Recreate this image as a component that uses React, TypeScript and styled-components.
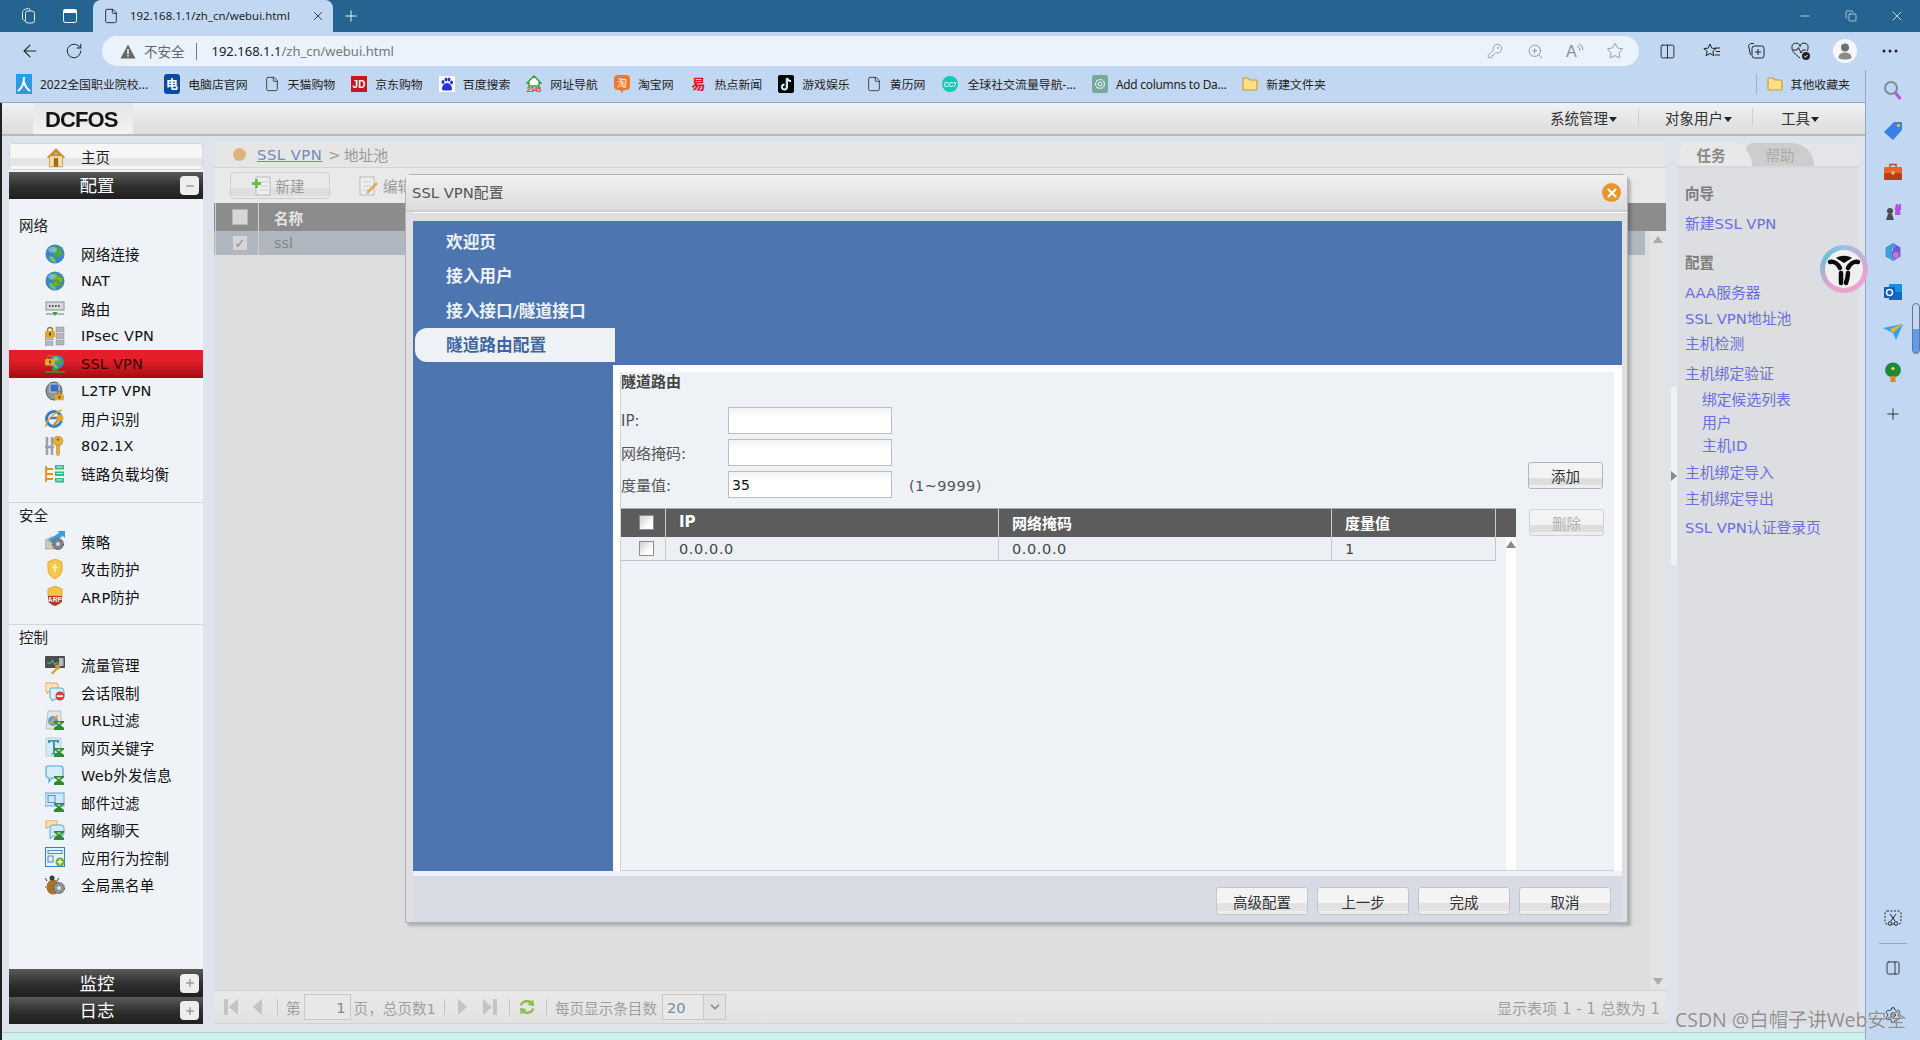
import React from "react";
import styled, { createGlobalStyle } from "styled-components";
import {
  ArrowLeft, RotateCw, File, X, Plus, Minus, Copy, KeyRound, ZoomIn, Star, Settings, PanelRight, Columns2, ChevronDown,
} from "lucide-react";

const Global = createGlobalStyle`
  html, body { margin: 0; padding: 0; width: 1920px; height: 1040px; overflow: hidden; }
  * { box-sizing: border-box; }
  body { font-family: "DejaVu Sans", "Noto Sans CJK SC", sans-serif; font-size: 14.5px; color: #222; }
`;

const Root = styled.div`
  position: relative;
  width: 1920px;
  height: 1040px;
  display: flex;
  flex-direction: column;
  overflow: hidden;
  background: #c2d8f2;
`;

/* ---------- Browser chrome ---------- */
const TitleBar = styled.div`
  height: 32px;
  background: #256490;
  display: flex;
  align-items: stretch;
  padding-left: 7px;
  color: #fff;
`;
const ChromeSlot = styled.div<{ $w?: number }>`
  width: ${(p) => p.$w ?? 44}px;
  flex: none;
  display: flex;
  align-items: center;
  justify-content: center;
`;
const Tab = styled.div`
  margin-left: 2px;
  width: 240px;
  background: #c2d8f2;
  border-radius: 8px 8px 0 0;
  color: #1c1c1c;
  display: flex;
  align-items: center;
  padding: 0 8px 0 10px;
  gap: 11px;
`;
const TabTitle = styled.span`
  font: 11.4px "Noto Sans", sans-serif;
  white-space: nowrap;
  flex: 1;
  padding-bottom: 2px;
`;
const WindowControls = styled.div`
  margin-left: auto;
  display: flex;
`;
const Toolbar = styled.div`
  height: 38px;
  display: flex;
  align-items: center;
  padding: 0 8px;
  color: #222;
`;
const Omni = styled.div`
  flex: 1;
  height: 30px;
  margin: 0 6px;
  background: #e9f2fd;
  border-radius: 15px;
  display: flex;
  align-items: center;
  padding: 0 4px 0 18px;
`;
const NotSecure = styled.span`
  margin-left: 8px;
  font: 13.5px "Noto Sans CJK SC", sans-serif;
  color: #666;
`;
const OmniSep = styled.span`
  width: 1px;
  height: 17px;
  background: #777;
  margin: 0 15px 0 11px;
`;
const Url = styled.span`
  font: 13px "Noto Sans", sans-serif;
  color: #777;
  b { font-weight: 400; color: #222; }
`;
const OmniTools = styled.div`
  margin-left: auto;
  display: flex;
  color: #8a8f96;
`;
const Below = styled.div`
  flex: 1;
  display: flex;
  min-height: 0;
`;
const PageColumn = styled.div`
  flex: 1;
  min-width: 0;
  display: flex;
  flex-direction: column;
`;
const Bookmarks = styled.div`
  height: 33px;
  flex: none;
  border-bottom: 1px solid #8fa8c0;
  display: flex;
  align-items: center;
  padding: 0 0 5px 16px;
  gap: 16px;
  font: 11.9px "Noto Sans", "Noto Sans CJK SC", sans-serif;
  color: #222;
`;
const Bookmark = styled.div<{ $tight?: boolean }>`
  display: flex;
  align-items: center;
  gap: 8px;
  white-space: nowrap;
  letter-spacing: ${(p) => (p.$tight ? "-0.25px" : "0")};
`;
const BookmarkEnd = styled.div`
  margin-left: auto;
  display: flex;
  align-items: center;
  gap: 8px;
  padding: 0 15px 0 10px;
  border-left: 1px solid #9fb4cc;
  height: 20px;
`;
const Rail = styled.div`
  width: 55px;
  flex: none;
  border-left: 1px solid #8fa8c8;
  display: flex;
  flex-direction: column;
  align-items: center;
`;
const RailIcon = styled.div<{ $h?: number }>`
  height: ${(p) => p.$h ?? 40}px;
  width: 100%;
  display: flex;
  align-items: center;
  justify-content: center;
  color: #222;
`;
const RailSpacer = styled.div`
  flex: 1;
`;
const RailRule = styled.div`
  width: 28px;
  height: 1px;
  background: #8fa8c8;
  margin: 2px 0;
`;
const RailThumb = styled.div`
  position: absolute;
  left: 1912px;
  top: 303px;
  width: 8px;
  height: 51px;
  border: 1.5px solid #6d7680;
  border-radius: 4px;
  background: linear-gradient(#c2d8f2 0 50%, #5f9cf0 50%);
`;

/* ---------- Firewall page ---------- */
const Page = styled.div`
  flex: 1;
  min-height: 0;
  display: flex;
  flex-direction: column;
  background: #dfe3eb;
  border-left: 2px solid #222;
`;
const Header = styled.div`
  height: 33px;
  flex: none;
  background: linear-gradient(#f1f1f1, #dcdcdc);
  border-bottom: 2px solid #b8b8b8;
  display: flex;
  align-items: center;
`;
const LogoBox = styled.div`
  margin-left: 31px;
  width: 100px;
  height: 31px;
  background: linear-gradient(#e6e6e6, #f2f2f2);
  display: flex;
  align-items: center;
  padding: 2px 0 0 12px;
  font: bold 22px "Liberation Sans", sans-serif;
  letter-spacing: -0.9px;
  color: #151515;
  filter: blur(0.6px);
`;
const HeaderMenus = styled.div`
  margin-left: auto;
  display: flex;
  align-items: center;
  padding: 0 46px 3px 0;
  color: #333;
`;
const HeaderMenu = styled.div<{ $l: number; $r: number; $sep?: boolean }>`
  display: flex;
  align-items: center;
  height: 18px;
  padding: 0 ${(p) => p.$r}px 0 ${(p) => p.$l}px;
  border-right: ${(p) => (p.$sep ? "1px solid #cfcfcf" : "none")};
  font-size: 14.5px;
  gap: 1px;
`;
const Caret = styled.span`
  width: 0;
  height: 0;
  border: 4.5px solid transparent;
  border-top: 5px solid #222;
  border-bottom: 0;
  margin-top: 4px;
`;
const Main = styled.div`
  flex: 1;
  min-height: 0;
  display: flex;
  padding: 7px 6px 8px 7px;
`;
const Sidebar = styled.div`
  width: 194px;
  flex: none;
  display: flex;
  flex-direction: column;
  background: #eff2f7;
`;
const HomeRow = styled.div`
  height: 27px;
  margin-bottom: 2px;
  display: flex;
  align-items: center;
  padding-left: 35px;
  gap: 14px;
  background: linear-gradient(#f6f6f6 0 55%, #e6e6e6 55% 90%, #f6f6f6 90%);
  border: 1px solid #d6d6d6;
  border-radius: 3px;
`;
const SideBar = styled.div<{ $h: number }>`
  height: ${(p) => p.$h}px;
  flex: none;
  display: flex;
  align-items: center;
  padding: 0 4px 0 9px;
  background: linear-gradient(#5a5a5a, #2e2e2e 55%, #1f1f1f);
  color: #fff;
`;
const SideBarTitle = styled.span`
  flex: 1;
  text-align: center;
  padding: 0 4px 2px 0;
  font-size: 17.5px;
`;
const Toggle = styled.span`
  width: 19px;
  height: 19px;
  border-radius: 4px;
  background: #eee;
  color: #777;
  display: flex;
  align-items: center;
  justify-content: center;
`;
const Section = styled.div<{ $pt: number; $pb: number; $line?: boolean }>`
  padding: ${(p) => p.$pt}px 0 ${(p) => p.$pb}px;
  border-bottom: ${(p) => (p.$line ? "1px solid #d2d5da" : "none")};
`;
const SectionLabel = styled.div<{ $h: number; $up: number }>`
  height: ${(p) => p.$h}px;
  display: flex;
  align-items: center;
  padding: 0 0 ${(p) => p.$up}px 10px;
  color: #222;
`;
const NavRow = styled.div<{ $active?: boolean }>`
  height: 27.5px;
  display: flex;
  align-items: center;
  padding-left: 36px;
  gap: 16px;
  color: ${(p) => (p.$active ? "#300" : "#111")};
  background: ${(p) => (p.$active ? "linear-gradient(#e41f2a 0 35%, #a50c12)" : "none")};
  white-space: nowrap;
  letter-spacing: 0.2px;
`;
const SideFill = styled.div`
  flex: 1;
`;
const Content = styled.div`
  width: 1452px;
  flex: none;
  margin-left: 11px;
  display: flex;
  flex-direction: column;
  background: #dddee0;
`;
const Crumb = styled.div`
  height: 25px;
  flex: none;
  display: flex;
  align-items: center;
  padding: 0 0 2px 19px;
  color: #999;
  background: #e6e6e7;
  border-bottom: 1px solid #d4d4d4;
  font-size: 14.8px;
`;
const CrumbDot = styled.span`
  width: 13px;
  height: 13px;
  border-radius: 50%;
  background: #dcb479;
  margin-right: 11px;
`;
const CrumbLink = styled.span`
  color: #7488bb;
  text-decoration: underline;
  letter-spacing: 0.5px;
  margin-right: 6px;
`;
const CrumbSep = styled.span`
  margin-right: 3px;
`;
const ListTools = styled.div`
  height: 35px;
  flex: none;
  display: flex;
  align-items: center;
  padding-left: 16px;
  background: #e9e9ea;
  color: #999;
`;
const ToolButton = styled.div`
  width: 100px;
  height: 27px;
  display: flex;
  align-items: center;
  justify-content: center;
  gap: 4px;
  padding: 0 4px 0 0;
  border: 1px solid #d0d0d0;
  border-radius: 4px;
  background: linear-gradient(#e9e9e9 0 60%, #dedede 60% 90%, #e9e9e9 90%);
`;
const ToolPlain = styled.div`
  margin-left: 29px;
  display: flex;
  align-items: center;
  gap: 4px;
`;
const ListHead = styled.div`
  height: 28px;
  flex: none;
  display: flex;
  align-items: center;
  background: #8c8c8c;
  color: #e4e4e4;
  font-weight: 700;
`;
const ListCheckCell = styled.div`
  width: 44px;
  height: 100%;
  flex: none;
  display: flex;
  align-items: center;
  justify-content: center;
  padding-left: 6px;
  border-left: 1px solid #d0d0d0;
  border-right: 1px solid #d0d0d0;
  margin-left: 1px;
`;
const ListName = styled.div`
  flex: 1;
  padding-left: 15px;
`;
const ListBody = styled.div`
  flex: 1;
  min-height: 0;
  display: flex;
`;
const ListRows = styled.div`
  flex: 1;
`;
const ListRow = styled.div`
  width: 1431px;
  height: 24px;
  display: flex;
  align-items: center;
  background: #b1b7c1;
  color: #868686;
`;
const ScrollCol = styled.div`
  width: 16px;
  flex: none;
  background: #e2e3e5;
  display: flex;
  flex-direction: column;
  justify-content: space-between;
  align-items: center;
  padding: 5px 0;
`;
const Tri = styled.span<{ $dir: "up" | "down"; $c?: string }>`
  width: 0;
  height: 0;
  border: 5px solid transparent;
  ${(p) =>
    p.$dir === "up"
      ? `border-bottom: 7px solid ${p.$c ?? "#aaa"}; border-top: 0;`
      : `border-top: 7px solid ${p.$c ?? "#aaa"}; border-bottom: 0;`}
`;
const Pager = styled.div`
  height: 34px;
  flex: none;
  display: flex;
  align-items: center;
  background: linear-gradient(#e9e9ea, #e2e2e3);
  border-top: 1px solid #d2d2d2;
  border-bottom: 1px solid #d2d2d2;
  color: #a0a0a0;
  font-size: 14.6px;
  padding-right: 6px;
`;
const PagerItem = styled.span<{ $ml: number }>`
  margin-left: ${(p) => p.$ml}px;
  display: flex;
  align-items: center;
  white-space: nowrap;
`;
const PagerSep = styled.span<{ $ml: number }>`
  margin-left: ${(p) => p.$ml}px;
  width: 1px;
  height: 16px;
  background: #c4c4c4;
`;
const PagerInput = styled.div<{ $w: number; $align: string }>`
  width: ${(p) => p.$w}px;
  height: 26px;
  border: 1px solid #c8c8c8;
  background: #e8e8e8;
  display: flex;
  align-items: center;
  justify-content: ${(p) => p.$align};
  padding: 0 4px;
  color: #808a96;
`;
const PagerSelectBtn = styled.div`
  width: 22px;
  height: 26px;
  border: 1px solid #c8c8c8;
  border-left: 0;
  background: #e2e2e2;
  display: flex;
  align-items: center;
  justify-content: center;
  color: #888;
`;
const PagerTotal = styled.span`
  margin-left: auto;
  white-space: nowrap;
  font-size: 15px;
`;
const Gutter = styled.div`
  width: 11px;
  flex: none;
  display: flex;
  flex-direction: column;
  align-items: flex-end;
  padding-top: 244px;
`;
const Handle = styled.div`
  width: 6px;
  height: 178px;
  background: #f0f1f3;
  border-radius: 3px 0 0 3px;
  display: flex;
  align-items: center;
  justify-content: flex-end;
`;
const HandleTri = styled.span`
  width: 0;
  height: 0;
  border: 5px solid transparent;
  border-left: 6px solid #888;
  border-right: 0;
`;
const Tasks = styled.div`
  width: 182px;
  flex: none;
  display: flex;
  flex-direction: column;
  background: #dddee2;
`;
const TaskTabs = styled.div`
  height: 25px;
  flex: none;
  display: flex;
  align-items: flex-end;
  padding-left: 3px;
  background: #e3e5ea;
  border-bottom: 2px solid #d8d9dc;
`;
const TaskTab = styled.div<{ $on?: boolean }>`
  width: ${(p) => (p.$on ? 72 : 68)}px;
  height: 23px;
  margin-left: ${(p) => (p.$on ? 0 : -6)}px;
  padding-right: ${(p) => (p.$on ? 10 : 0)}px;
  border-radius: 8px 22px 0 0;
  display: flex;
  align-items: center;
  justify-content: center;
  background: ${(p) => (p.$on ? "#e8e8e8" : "#cdcdcd")};
  color: ${(p) => (p.$on ? "#888" : "#aaa")};
  font-weight: ${(p) => (p.$on ? 700 : 400)};
  position: ${(p) => (p.$on ? "relative" : "static")};
  z-index: ${(p) => (p.$on ? 1 : 0)};
`;
const TaskList = styled.div`
  padding: 13px 0 0 8px;
  display: flex;
  flex-direction: column;
`;
const TaskHead = styled.div<{ $mt?: number }>`
  height: 22px;
  margin-top: ${(p) => p.$mt ?? 0}px;
  display: flex;
  align-items: center;
  color: #7c7c7c;
  font-weight: 700;
  font-size: 14.5px;
`;
const TaskLink = styled.div<{ $mt: number; $sub?: boolean }>`
  height: 22px;
  margin-top: ${(p) => p.$mt}px;
  display: flex;
  align-items: center;
  padding-left: ${(p) => (p.$sub ? 17 : 0)}px;
  color: #6b6edc;
  white-space: nowrap;
  font-size: 14.8px;
`;
const Strip = styled.div`
  height: 8px;
  flex: none;
  background: #cdf3f1;
  border-top: 1px solid #b7cdd0;
`;

/* ---------- Dialog ---------- */
const Dialog = styled.div`
  position: absolute;
  left: 405px;
  top: 174px;
  width: 1223px;
  height: 749px;
  display: flex;
  flex-direction: column;
  background: #dfdfe1;
  border: 1px solid #b2b2b2;
  border-radius: 6px 6px 0 0;
  box-shadow: 3px 3px 3px rgba(0, 0, 0, 0.22);
`;
const DialogTitle = styled.div`
  height: 37px;
  flex: none;
  display: flex;
  align-items: center;
  justify-content: space-between;
  padding: 0 6px 0 6px;
  background: linear-gradient(#f0f0f0, #dcdcdc);
  border-bottom: 2px solid #cfcfcf;
  color: #555;
  font-size: 14.8px;
`;
const DialogTitleText = styled.span`
  padding-bottom: 2px;
`;
const CloseDot = styled.span`
  width: 19px;
  height: 19px;
  border-radius: 50%;
  background: #e7962b;
  color: #fff;
  display: flex;
  align-items: center;
  justify-content: center;
`;
const TitleGap = styled.div`
  height: 9px;
  flex: none;
  border-top: 1px solid #fff;
  margin-left: 7px;
`;
const Wizard = styled.div`
  flex: 1;
  min-height: 0;
  margin: 0 5px 0 7px;
  display: flex;
  background: #4d76b0;
`;
const WizardNav = styled.div`
  width: 202px;
  flex: none;
  padding-top: 4px;
  position: relative;
  z-index: 1;
`;
const WizardItem = styled.div<{ $active?: boolean }>`
  height: 34.3px;
  display: flex;
  align-items: center;
  margin-left: 2px;
  padding: 0 0 2px 31px;
  font-size: 16.7px;
  font-weight: 700;
  white-space: nowrap;
  color: ${(p) => (p.$active ? "#3f659f" : "#edf2f9")};
  background: ${(p) => (p.$active ? "#eef1f6" : "transparent")};
  border-radius: ${(p) => (p.$active ? "12px 0 0 12px" : "0")};
`;
const WizardMain = styled.div`
  flex: 1;
  margin: 144px 0 0 -2px;
  background: #fff;
  padding: 7px 8px 0 7px;
  display: flex;
  min-width: 0;
`;
const Panel = styled.div`
  flex: 1;
  display: flex;
  flex-direction: column;
  background: #eef1f6;
  border-left: 1px solid #d0d4da;
  border-bottom: 1px solid #ced2d8;
  min-width: 0;
`;
const PanelTitle = styled.div`
  height: 20px;
  flex: none;
  display: flex;
  align-items: center;
  padding-bottom: 4px;
  font-size: 15px;
  font-weight: 700;
  color: #444;
`;
const FormArea = styled.div`
  margin-top: 15px;
  display: flex;
  align-items: flex-end;
  justify-content: space-between;
  padding-right: 11px;
`;
const Form = styled.div`
  display: flex;
  flex-direction: column;
  gap: 5px;
`;
const FormRow = styled.div`
  height: 27px;
  display: flex;
  align-items: center;
  color: #555;
`;
const FormLabel = styled.span`
  width: 107px;
  flex: none;
  font-size: 15px;
`;
const Input = styled.div`
  width: 164px;
  height: 27px;
  flex: none;
  border: 1px solid #bdbdbd;
  background: linear-gradient(#f2f2f2, #fff 35%);
  display: flex;
  align-items: center;
  padding-left: 3px;
  color: #111;
  font-size: 14px;
`;
const Hint = styled.span`
  margin-left: 17px;
  margin-top: 3px;
  letter-spacing: 0.4px;
  font-size: 14.5px;
`;
const SmallButton = styled.div<{ $off?: boolean }>`
  width: 75px;
  height: 27px;
  flex: none;
  border: 1px solid ${(p) => (p.$off ? "#d2d2d2" : "#b4b4b4")};
  border-radius: 3px;
  background: linear-gradient(#f3f3f3 0 60%, #dedede 60% 90%, #eee 90%);
  display: flex;
  align-items: center;
  justify-content: center;
  color: ${(p) => (p.$off ? "#b2b2b2" : "#333")};
  font-size: 14.5px;
`;
const AddWrap = styled.div`
  margin-bottom: 9px;
`;
const TableArea = styled.div`
  margin-top: 10px;
  flex: 1;
  min-height: 0;
  display: flex;
`;
const RouteTable = styled.div`
  width: 895px;
  flex: none;
  display: flex;
  flex-direction: column;
`;
const RouteHead = styled.div`
  height: 29px;
  flex: none;
  display: grid;
  grid-template-columns: 45px 333px 333px 164px 20px;
  background: #5c5c5c;
  border-top: 1px solid #aaa;
  color: #fff;
  font-size: 15px;
  font-weight: 700;
`;
const HeadCell = styled.div<{ $center?: boolean }>`
  display: flex;
  align-items: center;
  justify-content: ${(p) => (p.$center ? "center" : "flex-start")};
  padding: 0 0 2px ${(p) => (p.$center ? 6 : 13)}px;
  border-right: 1px solid #c8ccd0;
`;
const RouteBody = styled.div`
  flex: 1;
  min-height: 0;
  display: flex;
`;
const RouteRows = styled.div`
  width: 875px;
  flex: none;
`;
const RouteRow = styled.div`
  height: 24px;
  display: grid;
  grid-template-columns: 45px 333px 333px 164px;
  background: #ecf0f5;
  border-bottom: 1px solid #bfc4ca;
  color: #444;
  font-size: 14.5px;
  letter-spacing: 0.6px;
`;
const RouteCell = styled.div<{ $center?: boolean }>`
  display: flex;
  align-items: center;
  justify-content: ${(p) => (p.$center ? "center" : "flex-start")};
  padding-left: ${(p) => (p.$center ? 6 : 13)}px;
  border-right: 1px solid #c4c8ce;
`;
const RouteScroll = styled.div`
  margin-left: 10px;
  width: 10px;
  flex: none;
  background: #fff;
  display: flex;
  justify-content: center;
  padding-top: 4px;
`;
const SideActions = styled.div`
  margin: 1px 0 0 13px;
`;
const DialogFootGap = styled.div`
  height: 5px;
  flex: none;
  margin: 0 5px 0 7px;
  background: #eef1f6;
`;
const DialogFoot = styled.div`
  height: 46px;
  flex: none;
  margin: 0 5px 0 7px;
  background: #d9dbe4;
  display: flex;
  justify-content: flex-end;
  gap: 9px;
  padding: 11px 11px 0 0;
`;
const FootButton = styled.div`
  width: 92px;
  height: 28px;
  border: 1px solid #c4c6cc;
  border-radius: 3px;
  background: linear-gradient(#f4f4f5 0 58%, #e2e2e3 58% 90%, #eee 90%);
  display: flex;
  align-items: center;
  justify-content: center;
  color: #333;
  font-size: 14.5px;
`;
const Check = styled.span<{ $dim?: boolean }>`
  width: ${(p) => (p.$dim ? 16 : 15)}px;
  height: ${(p) => (p.$dim ? 16 : 15)}px;
  display: flex;
  align-items: center;
  justify-content: center;
  border: 1px solid ${(p) => (p.$dim ? "#b4b4b4" : "#8e8e8e")};
  background: ${(p) => (p.$dim ? "#d6d6d6" : "linear-gradient(135deg,#cfcfcf,#fff 70%)")};
  color: #8a8a8a;
  font-size: 13px;
`;

/* ---------- Overlays ---------- */
const Badge = styled.div`
  position: absolute;
  left: 1820px;
  top: 245px;
  width: 48px;
  height: 48px;
  border-radius: 50%;
  padding: 5px;
  background: conic-gradient(#9fc0e0, #e9a3cf 30%, #e9a3cf 60%, #6dbed8 85%, #9fc0e0);
  display: flex;
`;
const BadgeInner = styled.div`
  flex: 1;
  border-radius: 50%;
  background: #f0f0f0;
  display: flex;
  align-items: center;
  justify-content: center;
`;
const Watermark = styled.div`
  position: absolute;
  left: 1675px;
  top: 1004px;
  font: 19.4px "Noto Sans", "Noto Sans CJK SC", sans-serif;
  color: rgba(125, 125, 125, 0.85);
  text-shadow: 0 0 1px rgba(255, 255, 255, 0.8);
  white-space: nowrap;
`;

/* ---------- Drawings ---------- */
const S: React.FC<{ w?: number; h?: number; children: React.ReactNode; vb?: string }> = ({ w = 20, h = 20, vb = "0 0 20 20", children }) => (
  <svg width={w} height={h} viewBox={vb} style={{ flex: "none" }}>{children}</svg>
);
const Funnel = () => (
  <g>
    <path d="M9 11h10v1.6l-3.6 2.6 3.6 2.6V20H9v-2.2l3.6-2.6L9 12.6z" fill="#2f8a2f" />
    <path d="M11.5 12.5h5l-2.5 2z" fill="#bfe7a8" />
  </g>
);
const Globe = ({ cx = 10, cy = 10, r = 9.5 }) => (
  <g>
    <circle cx={cx} cy={cy} r={r} fill="#3b86c9" />
    <path d={`M${cx - r * 0.3} ${cy - r * 0.9}c${r * 0.7} ${r * 0.1} ${r * 1.1} ${r * 0.4} ${r * 1.1} ${r * 0.9}l${-r * 0.4} ${r * 0.4}l${-r * 0.5} ${-r * 0.2}l${-r * 0.2} ${-r * 0.5}z`} fill="#4fa64a" />
    <path d={`M${cx - r * 0.6} ${cy + r * 0.2}c${r * 0.4} 0 ${r * 0.7} ${r * 0.3} ${r * 0.7} ${r * 0.7}c${-r * 0.4} 0 ${-r * 0.7} ${-r * 0.3} ${-r * 0.7} ${-r * 0.7}z`} fill="#79bf5a" />
    <ellipse cx={cx - r * 0.25} cy={cy - r * 0.45} rx={r * 0.45} ry={r * 0.3} fill="#9fd0f2" opacity=".6" />
  </g>
);
const Lock = ({ x = 0, y = 0 }) => (
  <g transform={`translate(${x} ${y})`}>
    <path d="M2.5 4V3a2.5 2.5 0 0 1 5 0v1" fill="none" stroke="#9a7a1a" strokeWidth="1.3" />
    <rect y="4" width="10" height="6.5" rx="1" fill="#e0a92c" />
    <rect x="4" y="5.5" width="2" height="3" fill="#6f4c0c" />
  </g>
);
const Server = ({ x = 0, y = 0 }) => (
  <g transform={`translate(${x} ${y})`} fill="#b5b8ba" stroke="#888" strokeWidth=".5">
    <rect width="8" height="5" /><rect y="6.5" width="8" height="5" /><rect y="13" width="8" height="5" />
  </g>
);
const NavIcon: React.FC<{ kind: string }> = ({ kind }) => {
  switch (kind) {
    case "home":
      return <S w={22} h={22}><path d="M2 10 10 2l8 8v1H2z" fill="#d98a1f" /><rect x="4" y="9" width="12" height="10" fill="#f3dfa9" stroke="#b58a3c" strokeWidth=".6" /><rect x="8" y="11" width="4" height="8" fill="#a8691f" /><circle cx="10" cy="7" r="1.5" fill="#7fb6e0" /></S>;
    case "globe":
      return <S><Globe /></S>;
    case "nat":
      return <S><Globe /><path d="M8 9c1-3 6-4 8-2l1.500-1.500V11h-5l1.800-1.800c-1.500-1-4-.8-5 .5zM18 12c-1 3-6 4-8 2l-1.500 1.500V11h5l-1.800 1.800c1.500 1 4 .8 5-.5z" fill="#7dbb2c" stroke="#4f8a15" strokeWidth=".4" /></S>;
    case "router":
      return <S><rect x="1" y="3" width="18" height="8" fill="#d8dadc" stroke="#8d8f91" /><g fill="#555"><rect x="4" y="6" width="1.6" height="2" /><rect x="7" y="6" width="1.600" height="2" /><rect x="10" y="6" width="1.6" height="2" /><rect x="13" y="6" width="1.6" height="2" /></g><path d="M1 15h18" stroke="#9a9a9a" strokeWidth="1.4" /><path d="M7.500 13h5L10 17z" fill="#39a13a" /></S>;
    case "ipsec":
      return <S><Server x={11} y={1} /><Server x={0} y={9} /><Lock x={0} y={1} /></S>;
    case "ssl":
      return <S><Globe cx={12} cy={8} r={7} /><Lock x={0} y={1} /><path d="M0 18h20M10 15v3" stroke="#2e9a3e" strokeWidth="1.5" /><rect x="7" y="14" width="6" height="2.5" fill="#39a13a" /></S>;
    case "l2tp":
      return <S><ellipse cx="9" cy="10" rx="8" ry="9" fill="#8f979c" stroke="#555" /><rect x="5" y="3" width="9" height="8" fill="#3d6fc0" stroke="#dde" strokeWidth=".8" /><g transform="scale(.9)"><Lock x={11} y={11} /></g></S>;
    case "user":
      return <S><circle cx="9" cy="10" r="7.500" fill="none" stroke="#2f7ed0" strokeWidth="3" /><path d="M5 9h8" stroke="#2f7ed0" strokeWidth="2.500" /><path d="M1 18C0 14 7 4 17 1" fill="none" stroke="#e3a72c" strokeWidth="1.500" /><circle cx="15" cy="9" r="3.500" fill="#e3a72c" /><path d="M13 11l-5 6" stroke="#c98b17" strokeWidth="2" /></S>;
    case "dot1x":
      return <S><path d="M2 1v18M7 1v18M0 11h9" stroke="#9ea0a2" strokeWidth="2.500" fill="none" /><circle cx="13" cy="5" r="4.800" fill="#e0b23a" stroke="#a9801c" strokeWidth=".6" /><circle cx="13" cy="3.500" r="1.200" fill="#8a6a12" /><path d="M11.500 9h3v9l-1.500 2-1.500-2z" fill="#e0b23a" stroke="#a9801c" strokeWidth=".5" /></S>;
    case "balance":
      return <S><path d="M1 2v16M1 5h7M1 10h7M1 15h7" stroke="#e6901e" strokeWidth="1.800" fill="none" /><g fill="#2fbf86"><rect x="10" y="1" width="9" height="4.500" /><rect x="10" y="7.500" width="9" height="4.500" /><rect x="10" y="14" width="9" height="4.500" /></g><g fill="#d9f7ea"><rect x="11.500" y="2.500" width="6" height="1" /><rect x="11.500" y="9" width="6" height="1" /><rect x="11.500" y="15.500" width="6" height="1" /></g></S>;
    case "policy":
      return <S><path d="M0 9l6-3h6v12H0z" fill="#cfc7b4" stroke="#8d8672" strokeWidth=".5" /><path d="M3 9 14 2l-1-2h7v7l-2-2L7 12z" fill="#3f9bdc" /><circle cx="13" cy="13" r="5.500" fill="#7d8288" stroke="#555" strokeDasharray="2 1" /><circle cx="13" cy="13" r="2" fill="#d8d8d8" /></S>;
    case "shield":
      return <S><path d="M10 0l7 3v7c0 4.500-3 8-7 10C6 18 3 14.500 3 10V3z" fill="#f4c94a" stroke="#e8a52a" /><path d="M10 5v8M7 8.500h6" stroke="#fbe9a6" strokeWidth="2" /></S>;
    case "arp":
      return <S><path d="M10 0l7 3v7H3V3z" fill="#f4c14a" stroke="#e8a52a" /><path d="M3 10h14v6c-2 1.500-4 3-7 4-3-1-5-2.500-7-4z" fill="#b13a2a" /><text x="10" y="15.800" fontSize="6.500" fontWeight="700" fontFamily="Liberation Sans" textAnchor="middle" fill="#fff">ARP</text></S>;
    case "traffic":
      return <S><rect y="1" width="20" height="12" rx="1" fill="#4a4d50" /><path d="M2 8h4l1.500-3 2 5 1-2h3" stroke="#4ed07a" fill="none" /><rect x="14" y="3" width="4.500" height="8" fill="#bbb" /><path d="M6 18l6-6 1.500 1.500-6 6z" fill="#d59a2b" /><circle cx="12.500" cy="12" r="2.500" fill="#d59a2b" /></S>;
    case "session":
      return <S><path d="M1 1h10a2 2 0 0 1 2 2v4a2 2 0 0 1-2 2H5l-3 3V9a2 2 0 0 1-2-2V3a2 2 0 0 1 1-2z" fill="#fbe3c0" stroke="#e6a65c" /><path d="M6 6h10a3 3 0 0 1 3 3v5a3 3 0 0 1-3 3h-6l-3 2v-2a2 2 0 0 1-2-2V8a2 2 0 0 1 1-2z" fill="#d9effa" stroke="#58a8d8" /><circle cx="15" cy="14" r="4.500" fill="#e13d3d" /><rect x="12" y="13.200" width="6" height="1.800" fill="#fff" /></S>;
    case "url":
      return <S><path d="M3 1h13v18H1z" fill="#e3e6e2" stroke="#9ba19a" strokeWidth=".6" /><circle cx="8" cy="11" r="5" fill="#5aa0d8" /><path d="M4 13 12 5l1.500 1.500-8 8z" fill="#e2a32a" /><Funnel /></S>;
    case "keyword":
      return <S><rect x="1" y="1" width="15" height="18" fill="#d7ecf2" stroke="#9fb6bd" strokeWidth=".6" /><path d="M3 3h11v3h-1.500l-.5-1.300H10V16h1.500v1.500h-5V16H8V4.700H5.500L5 6H3z" fill="#3f92b8" /><Funnel /></S>;
    case "webout":
      return <S><path d="M3 1h12a3 3 0 0 1 3 3v6a3 3 0 0 1-3 3H7l-3 4v-4a3 3 0 0 1-3-3V3a2 2 0 0 1 2-2z" fill="#d6eefc" stroke="#4fa5e0" strokeWidth="1.200" /><Funnel /></S>;
    case "mail":
      return <S><rect y="1" width="19" height="13" fill="#cfe7f8" stroke="#5aa6de" /><rect x="3" y="3.500" width="7" height="7" fill="none" stroke="#5f8fb3" /><Funnel /></S>;
    case "chat":
      return <S><path d="M2 0h8a2 2 0 0 1 2 2v5H3L1 9V1z" fill="#fbdcae" stroke="#e6a65c" /><path d="M7 5h9a3 3 0 0 1 3 3v5a3 3 0 0 1-3 3H8l-3 3V8a3 3 0 0 1 2-3z" fill="#cfeaf8" stroke="#58a8d8" /><Funnel /></S>;
    case "app":
      return <S><rect x=".5" y=".5" width="19" height="19" fill="#e5f1fb" stroke="#2f83c9" /><rect x="3" y="3.500" width="14" height="3" fill="none" stroke="#4b8dc4" /><rect x="3" y="9" width="5" height="6" fill="none" stroke="#4b8dc4" /><circle cx="15" cy="15" r="4.500" fill="#74b61e" /><path d="M15 12.500v5M12.500 15h5" stroke="#fff" strokeWidth="1.400" /></S>;
    default:
      return <S><ellipse cx="8" cy="12" rx="6.500" ry="7.500" fill="#a8742c" /><circle cx="7" cy="3" r="2.500" fill="#3a3a3a" /><path d="M2 6 0 3M12 6l2-3M1 12h-1" stroke="#333" /><circle cx="14" cy="13" r="5.500" fill="#8d9296" stroke="#555" strokeDasharray="2 1" /><circle cx="14" cy="13" r="2" fill="#ddd" /></S>;
  }
};

const Bm = {
  Ren: () => <S w={16} h={20} vb="0 0 16 20"><rect width="16" height="20" fill="#2d9ae6" /><path d="M8 3c0 6-2 11-6 14M8 8c1 4 3 7 6 9" stroke="#fff" strokeWidth="2" fill="none" /></S>,
  Dian: () => <S w={16} h={20} vb="0 0 16 20"><rect width="16" height="20" rx="3" fill="#0c4aa0" /><text x="8" y="15" fontSize="12" fontWeight="700" textAnchor="middle" fill="#fff" fontFamily="Noto Sans CJK SC">电</text></S>,
  Doc: () => <File size={16} strokeWidth={1.2} color="#222" />,
  Jd: () => <S w={16} h={16} vb="0 0 16 16"><rect width="16" height="16" fill="#c8161d" /><text x="8" y="12" fontSize="10" fontWeight="700" textAnchor="middle" fill="#fff" fontFamily="Liberation Sans">JD</text></S>,
  Baidu: () => <S w={16} h={16} vb="0 0 16 16"><rect width="16" height="16" fill="#fff" /><g fill="#2932e1"><ellipse cx="4" cy="6" rx="1.500" ry="2" /><ellipse cx="7" cy="3.500" rx="1.400" ry="2" /><ellipse cx="10" cy="3.500" rx="1.400" ry="2" /><ellipse cx="12.500" cy="6.500" rx="1.500" ry="2" /><path d="M8 7c-3 0-5 3.500-5 6 0 2 3 1.500 5 1.500s5 .5 5-1.500c0-2.500-2-6-5-6z" /></g></S>,
  Nav: () => <S w={16} h={18} vb="0 0 16 18"><path d="M8 1 1 8h2v3h10V8h2z" fill="#fff" stroke="#3b9c3e" strokeWidth="1.500" /><text x="8" y="17" fontSize="6.500" fontWeight="700" textAnchor="middle" fill="#d2332b" fontFamily="Liberation Sans">2345</text></S>,
  Tao: () => <S w={16} h={18} vb="0 0 16 18"><rect width="16" height="15" rx="4" fill="#f3762b" /><path d="M6 15l2 3 2-3z" fill="#f3762b" /><text x="8" y="12" fontSize="10" textAnchor="middle" fill="#fff" fontFamily="Noto Sans CJK SC">淘</text></S>,
  Hot: () => <S w={17} h={18} vb="0 0 17 18"><text x="8.500" y="14" fontSize="14" fontWeight="700" textAnchor="middle" fill="#e60f1a" fontFamily="Noto Sans CJK SC">易</text></S>,
  Tik: () => <S w={16} h={18} vb="0 0 16 18"><rect width="16" height="18" rx="2" fill="#000" /><path d="M9 3v9a2.500 2.500 0 1 1-2.500-2.500M9 3c.5 2 2 3 4 3" stroke="#fff" strokeWidth="1.800" fill="none" /><path d="M8 3v9a2.500 2.500 0 1 1-2.500-2.500" stroke="#25f4ee" strokeWidth=".7" fill="none" /></S>,
  Cc7: () => <S w={18} h={16} vb="0 0 18 16"><circle cx="9" cy="8" r="8" fill="#12c9b8" /><text x="9" y="10.500" fontSize="6.500" fontWeight="700" textAnchor="middle" fill="#dffbf6" fontFamily="Liberation Sans">CC7</text></S>,
  Gpt: () => <S w={16} h={18} vb="0 0 16 18"><rect width="16" height="18" rx="2" fill="#74aa9c" /><circle cx="8" cy="9" r="4.500" fill="none" stroke="#e8f4f0" strokeWidth="1.200" strokeDasharray="3 1" /><circle cx="8" cy="9" r="2" fill="none" stroke="#e8f4f0" /></S>,
  Folder: () => <S w={16} h={16} vb="0 0 16 16"><path d="M1 3a1 1 0 0 1 1-1h4l2 2h6a1 1 0 0 1 1 1v8a1 1 0 0 1-1 1H2a1 1 0 0 1-1-1z" fill="#fbe08a" stroke="#c79a2a" strokeWidth="1.100" /></S>,
};

const Chrome = {
  Workspaces: () => <S w={18} h={18} vb="0 0 18 18"><rect x="6.500" y="4" width="9" height="12" rx="2.500" fill="none" stroke="#dfe9f3" /><path d="M6.500 14.500 3.500 12V5.500c0-1.500 1-2.500 2.500-3l3-1.200c1-.3 1.700.3 1.700 1V4" fill="none" stroke="#dfe9f3" /></S>,
  Vertical: () => <S w={16} h={16} vb="0 0 16 16"><rect x="1.500" y="1.500" width="13" height="13" rx="2" fill="none" stroke="#fff" /><rect x="1.500" y="1.500" width="13" height="3.500" fill="#fff" /></S>,
  Warn: () => <S w={16} h={15} vb="0 0 16 15"><path d="M8 .5 15.500 14.500H.5z" fill="#666" /><rect x="7.200" y="5" width="1.600" height="5" fill="#e9f2fd" /><rect x="7.200" y="11" width="1.600" height="1.600" fill="#e9f2fd" /></S>,
  ReadAloud: () => <S w={18} h={18} vb="0 0 18 18"><text x="0" y="15" fontSize="16" fontFamily="Liberation Sans" fill="#8a8f96">A</text><path d="M11 4c2 1 3 2.500 3 5M13 2c2.500 1 4 3.500 4 6" stroke="#8a8f96" fill="none" /></S>,
  Fav: () => <S w={18} h={18} vb="0 0 18 18"><path d="M7 2l1.800 4.200 4.400.3-3.400 2.900 1.100 4.400L7 11.400l-3.900 2.400 1.100-4.400L.8 6.500l4.400-.3z" fill="none" stroke="#222" /><path d="M12 6h5M13 9.500h4M12 13h5" stroke="#222" /></S>,
  Coll: () => <S w={18} h={18} vb="0 0 18 18"><path d="M7 1.500H3.500l-2 2 2 9.500" fill="none" stroke="#222" /><rect x="5" y="4" width="12" height="12" rx="2.500" fill="none" stroke="#222" /><path d="M11 7v6M8 10h6" stroke="#222" /></S>,
  Health: () => <S w={20} h={18} vb="0 0 20 18"><path d="M9 16C4 12 1 9.500 1 6a4 4 0 0 1 8-1.500A4 4 0 0 1 17 6c0 1-.3 2-.8 3" fill="none" stroke="#222" /><path d="M2 8h4l1.500-2.500L10 11l1.500-3H15" fill="none" stroke="#222" /><circle cx="15" cy="14" r="4" fill="#222" /><path d="M13.300 14l1.200 1.200 2-2.200" stroke="#fff" fill="none" /></S>,
  Avatar: () => <S w={24} h={24} vb="0 0 24 24"><circle cx="12" cy="12" r="12" fill="#f5f7fa" /><circle cx="12" cy="8.500" r="4" fill="#707070" /><path d="M5.500 19c0-4 3-5.500 6.500-5.500s6.500 1.500 6.500 5.500c-3 2-10 2-13 0z" fill="#8a8a8a" /></S>,
  Dots: () => <S w={18} h={6} vb="0 0 18 6"><g fill="#222"><circle cx="3" cy="3" r="1.500" /><circle cx="9" cy="3" r="1.500" /><circle cx="15" cy="3" r="1.500" /></g></S>,
};

const RailIcons = {
  Search: () => <S w={20} h={22} vb="0 0 20 22"><circle cx="8" cy="8" r="6" fill="#bcd7ee" stroke="#7d8b97" strokeWidth="2" /><path d="M12.500 13l5 6" stroke="#c64fe0" strokeWidth="3" /></S>,
  Tag: () => <S w={20} h={20} vb="0 0 20 20"><path d="M11 1h8v8l-9 10L1 11z" fill="#3a7fe4" /><circle cx="15.500" cy="4.500" r="1.600" fill="#f3c746" /></S>,
  Box: () => <S w={20} h={18} vb="0 0 20 18"><path d="M7 4V1.500h6V4" fill="none" stroke="#c4491c" strokeWidth="1.500" /><rect x="1" y="4" width="18" height="6" rx="1" fill="#e8622a" /><rect x="1" y="10" width="18" height="7" rx="1" fill="#bb3d12" /><rect x="8.500" y="8.500" width="3" height="3" fill="#f4c27d" /></S>,
  Chess: () => <S w={20} h={20} vb="0 0 20 20"><circle cx="7" cy="9" r="3" fill="#4d4d4d" /><path d="M5 12h4l2 6H3z" fill="#4d4d4d" /><path d="M13 2h2v1.500h1V2h2v6h-1l.5 5h-5.500l.5-5h-1z" fill="#b452e8" /></S>,
  Copilot: () => <S w={20} h={20} vb="0 0 20 20"><path d="M10 1l7.500 4.500v9L10 19l-2-8 2-3z" fill="#6d5ce0" /><path d="M10 1 2.500 5.500v9L10 19l3-2-4-2V7l4-2z" fill="#3ba0d8" /><circle cx="13" cy="13" r="3" fill="#d86bc8" /></S>,
  Outlook: () => <S w={20} h={20} vb="0 0 20 20"><rect x="6" y="2" width="13" height="16" rx="1" fill="#1490df" /><rect x="6" y="10" width="13" height="8" fill="#0a6cc0" /><rect x="1" y="5" width="11" height="11" rx="1" fill="#0e5fb4" /><circle cx="6.500" cy="10.500" r="3" fill="none" stroke="#fff" strokeWidth="1.500" /></S>,
  Send: () => <S w={20} h={16} vb="0 0 20 16"><path d="M0 4l20-4-7 16-3-7z" fill="#2aa5ec" /><path d="M10 9l10-9-13 5z" fill="#f3b13a" /></S>,
  Tree: () => <S w={18} h={20} vb="0 0 18 20"><ellipse cx="9" cy="8" rx="8" ry="7.500" fill="#1c8a3a" /><rect x="6.500" y="14" width="5" height="6" fill="#d58b20" /><rect x="7.500" y="5" width="3" height="3" fill="#f2d34a" transform="rotate(45 9 6.500)" /></S>,
  Shot: () => <S w={18} h={18} vb="0 0 18 18"><rect x="1" y="1" width="16" height="13" rx="2" fill="none" stroke="#222" strokeDasharray="2 1.500" /><path d="M6 4l5 7M12 4l-5 7" stroke="#222" /><circle cx="6" cy="13.500" r="1.800" fill="#c2d8f2" stroke="#222" /><circle cx="12" cy="13.500" r="1.800" fill="#c2d8f2" stroke="#222" /></S>,
};

const BadgeLogo = () => (
  <S w={34} h={34} vb="0 0 34 34">
    <g fill="none" stroke="#0a0a0a" strokeWidth="4.500" strokeLinecap="round">
      <path d="M3 10c4-1 8 2 10 6" />
      <path d="M31 10c-4-1-8 2-10 6" />
      <path d="M9 6c5-3 11-3 16 0l-8 5z" fill="#0a0a0a" stroke="none" />
      <path d="M14 21v10" />
      <path d="M21 21c0 4-1 7-2 10" />
    </g>
  </S>
);

const network = [
  ["globe", "网络连接"], ["nat", "NAT"], ["router", "路由"], ["ipsec", "IPsec VPN"], ["ssl", "SSL VPN"],
  ["l2tp", "L2TP VPN"], ["user", "用户识别"], ["dot1x", "802.1X"], ["balance", "链路负载均衡"],
];
const security = [["policy", "策略"], ["shield", "攻击防护"], ["arp", "ARP防护"]];
const control = [
  ["traffic", "流量管理"], ["session", "会话限制"], ["url", "URL过滤"], ["keyword", "网页关键字"], ["webout", "Web外发信息"],
  ["mail", "邮件过滤"], ["chat", "网络聊天"], ["app", "应用行为控制"], ["black", "全局黑名单"],
];

const Rows: React.FC<{ items: string[][] }> = ({ items }) => (
  <>
    {items.map(([k, t]) => (
      <NavRow key={t} $active={t === "SSL VPN"}>
        <NavIcon kind={k} />
        <span>{t}</span>
      </NavRow>
    ))}
  </>
);

const bookmarks: [React.FC, string][] = [
  [Bm.Ren, "2022全国职业院校..."], [Bm.Dian, "电脑店官网"], [Bm.Doc, "天猫购物"], [Bm.Jd, "京东购物"], [Bm.Baidu, "百度搜索"],
  [Bm.Nav, "网址导航"], [Bm.Tao, "淘宝网"], [Bm.Hot, "热点新闻"], [Bm.Tik, "游戏娱乐"], [Bm.Doc, "黄历网"],
  [Bm.Cc7, "全球社交流量导航-..."], [Bm.Gpt, "Add columns to Da..."], [Bm.Folder, "新建文件夹"],
];

const PagerTri: React.FC<{ dir: "l" | "r"; bar?: boolean }> = ({ dir, bar }) => (
  <S w={bar ? 14 : 9} h={16} vb={bar ? "0 0 14 16" : "0 0 9 16"}>
    {dir === "l" ? (
      bar ? (<><rect width="4" height="16" fill="#c4c4c4" /><path d="M14 0v16L5 8z" fill="#c4c4c4" /></>) : <path d="M9 0v16L0 8z" fill="#c4c4c4" />
    ) : bar ? (<><rect x="10" width="4" height="16" fill="#c4c4c4" /><path d="M0 0v16l9-8z" fill="#c4c4c4" /></>) : <path d="M0 0v16l9-8z" fill="#c4c4c4" />}
  </S>
);

export default function App() {
  return (
    <Root>
      <Global />
      <TitleBar>
        <ChromeSlot $w={42}><Chrome.Workspaces /></ChromeSlot>
        <ChromeSlot $w={42}><Chrome.Vertical /></ChromeSlot>
        <Tab>
          <File size={16} strokeWidth={1.3} />
          <TabTitle>192.168.1.1/zh_cn/webui.html</TabTitle>
          <X size={14} strokeWidth={1.4} />
        </Tab>
        <ChromeSlot $w={36}><Plus size={18} strokeWidth={1.2} /></ChromeSlot>
        <WindowControls>
          <ChromeSlot $w={46}><Minus size={14} strokeWidth={1.2} /></ChromeSlot>
          <ChromeSlot $w={46}><Copy size={12} strokeWidth={1.2} /></ChromeSlot>
          <ChromeSlot $w={46}><X size={16} strokeWidth={1.1} /></ChromeSlot>
        </WindowControls>
      </TitleBar>
      <Toolbar>
        <ChromeSlot><ArrowLeft size={20} strokeWidth={1.3} /></ChromeSlot>
        <ChromeSlot><RotateCw size={18} strokeWidth={1.3} /></ChromeSlot>
        <Omni>
          <Chrome.Warn />
          <NotSecure>不安全</NotSecure>
          <OmniSep />
          <Url><b>192.168.1.1</b>/zh_cn/webui.html</Url>
          <OmniTools>
            <ChromeSlot $w={40}><KeyRound size={16} strokeWidth={1.2} /></ChromeSlot>
            <ChromeSlot $w={40}><ZoomIn size={17} strokeWidth={1.2} /></ChromeSlot>
            <ChromeSlot $w={40}><Chrome.ReadAloud /></ChromeSlot>
            <ChromeSlot $w={40}><Star size={18} strokeWidth={1.2} /></ChromeSlot>
          </OmniTools>
        </Omni>
        <ChromeSlot $w={44.5}><Columns2 size={17} strokeWidth={1.3} /></ChromeSlot>
        <ChromeSlot $w={44.5}><Chrome.Fav /></ChromeSlot>
        <ChromeSlot $w={44.5}><Chrome.Coll /></ChromeSlot>
        <ChromeSlot $w={44.5}><Chrome.Health /></ChromeSlot>
        <ChromeSlot $w={44.5}><Chrome.Avatar /></ChromeSlot>
        <ChromeSlot $w={44.5}><Chrome.Dots /></ChromeSlot>
      </Toolbar>
      <Below>
        <PageColumn>
          <Bookmarks>
            {bookmarks.map(([I, t]) => (
              <Bookmark key={t} $tight={t.startsWith("Add")}><I /><span>{t}</span></Bookmark>
            ))}
            <BookmarkEnd><Bm.Folder /><span>其他收藏夹</span></BookmarkEnd>
          </Bookmarks>
          <Page>
            <Header>
              <LogoBox>DCFOS</LogoBox>
              <HeaderMenus>
                <HeaderMenu $l={0} $r={21} $sep>系统管理<Caret /></HeaderMenu>
                <HeaderMenu $l={26} $r={20} $sep>对象用户<Caret /></HeaderMenu>
                <HeaderMenu $l={28} $r={0}>工具<Caret /></HeaderMenu>
              </HeaderMenus>
            </Header>
            <Main>
              <Sidebar>
                <HomeRow><NavIcon kind="home" /><span>主页</span></HomeRow>
                <SideBar $h={27}><SideBarTitle>配置</SideBarTitle><Toggle><Minus size={12} strokeWidth={2.2} /></Toggle></SideBar>
                <Section $pt={13} $pb={14} $line>
                  <SectionLabel $h={28} $up={4}>网络</SectionLabel>
                  <Rows items={network} />
                </Section>
                <Section $pt={0} $pb={14} $line>
                  <SectionLabel $h={25} $up={2}>安全</SectionLabel>
                  <Rows items={security} />
                </Section>
                <Section $pt={0} $pb={0}>
                  <SectionLabel $h={26} $up={4}>控制</SectionLabel>
                  <Rows items={control} />
                </Section>
                <SideFill />
                <SideBar $h={28}><SideBarTitle>监控</SideBarTitle><Toggle><Plus size={12} strokeWidth={2} /></Toggle></SideBar>
                <SideBar $h={27}><SideBarTitle>日志</SideBarTitle><Toggle><Plus size={12} strokeWidth={2} /></Toggle></SideBar>
              </Sidebar>
              <Content>
                <Crumb>
                  <CrumbDot />
                  <CrumbLink>SSL VPN</CrumbLink>
                  <CrumbSep>&gt;</CrumbSep>
                  <span>地址池</span>
                </Crumb>
                <ListTools>
                  <ToolButton>
                    <S w={20} h={20}><rect x="4" y="1" width="14" height="18" fill="#eee" stroke="#bbb" /><path d="M8 6h8M8 10h8M8 14h8" stroke="#ccc" /><path d="M3 3h3v3h3v3H6v3H3V9H0V6h3z" fill="#6cc04a" /></S>
                    <span>新建</span>
                  </ToolButton>
                  <ToolPlain>
                    <S w={20} h={20}><rect x="1" y="1" width="14" height="18" fill="#eee" stroke="#bbb" /><path d="M4 6h8M4 10h8M4 14h5" stroke="#ccc" /><path d="M8 15 17 6l2 2-9 9-3 1z" fill="#e3ab5c" /></S>
                    <span>编辑</span>
                  </ToolPlain>
                </ListTools>
                <ListHead>
                  <ListCheckCell><Check $dim /></ListCheckCell>
                  <ListName>名称</ListName>
                </ListHead>
                <ListBody>
                  <ListRows>
                    <ListRow>
                      <ListCheckCell><Check $dim>✓</Check></ListCheckCell>
                      <ListName>ssl</ListName>
                    </ListRow>
                  </ListRows>
                  <ScrollCol>
                    <Tri $dir="up" />
                    <Tri $dir="down" />
                  </ScrollCol>
                </ListBody>
                <Pager>
                  <PagerItem $ml={10}><PagerTri dir="l" bar /></PagerItem>
                  <PagerItem $ml={15}><PagerTri dir="l" /></PagerItem>
                  <PagerSep $ml={15} />
                  <PagerItem $ml={8}>第</PagerItem>
                  <PagerItem $ml={3}><PagerInput $w={47} $align="flex-end">1</PagerInput></PagerItem>
                  <PagerItem $ml={3}>页，总页数1</PagerItem>
                  <PagerSep $ml={8} />
                  <PagerItem $ml={13}><PagerTri dir="r" /></PagerItem>
                  <PagerItem $ml={16}><PagerTri dir="r" bar /></PagerItem>
                  <PagerSep $ml={12} />
                  <PagerItem $ml={8}>
                    <S w={19} h={20}><path d="M2 8C3 3 10 1 14 4l2-2 1 7-7-1 2-2C9 4.500 5 5.500 4 9z" fill="#93bb53" /><path d="M17 12c-1 5-8 7-12 4l-2 2-1-7 7 1-2 2c3 1.500 7 .5 8-3z" fill="#93bb53" /></S>
                  </PagerItem>
                  <PagerSep $ml={9} />
                  <PagerItem $ml={8}>每页显示条目数</PagerItem>
                  <PagerItem $ml={5}>
                    <PagerInput $w={42} $align="flex-start">20</PagerInput>
                    <PagerSelectBtn><ChevronDown size={14} strokeWidth={3} /></PagerSelectBtn>
                  </PagerItem>
                  <PagerTotal>显示表项 1 - 1 总数为 1</PagerTotal>
                </Pager>
              </Content>
              <Gutter>
                <Handle><HandleTri /></Handle>
              </Gutter>
              <Tasks>
                <TaskTabs>
                  <TaskTab $on>任务</TaskTab>
                  <TaskTab>帮助</TaskTab>
                </TaskTabs>
                <TaskList>
                  <TaskHead>向导</TaskHead>
                  <TaskLink $mt={8}>新建SSL VPN</TaskLink>
                  <TaskHead $mt={17}>配置</TaskHead>
                  <TaskLink $mt={8}>AAA服务器</TaskLink>
                  <TaskLink $mt={4}>SSL VPN地址池</TaskLink>
                  <TaskLink $mt={3}>主机检测</TaskLink>
                  <TaskLink $mt={8}>主机绑定验证</TaskLink>
                  <TaskLink $mt={4} $sub>绑定候选列表</TaskLink>
                  <TaskLink $mt={1} $sub>用户</TaskLink>
                  <TaskLink $mt={1} $sub>主机ID</TaskLink>
                  <TaskLink $mt={5}>主机绑定导入</TaskLink>
                  <TaskLink $mt={4}>主机绑定导出</TaskLink>
                  <TaskLink $mt={7}>SSL VPN认证登录页</TaskLink>
                </TaskList>
              </Tasks>
            </Main>
            <Strip />
          </Page>
        </PageColumn>
        <Rail>
          <RailIcon $h={41}><RailIcons.Search /></RailIcon>
          <RailIcon $h={40}><RailIcons.Tag /></RailIcon>
          <RailIcon $h={41}><RailIcons.Box /></RailIcon>
          <RailIcon $h={40}><RailIcons.Chess /></RailIcon>
          <RailIcon $h={40}><RailIcons.Copilot /></RailIcon>
          <RailIcon $h={40}><RailIcons.Outlook /></RailIcon>
          <RailIcon $h={39}><RailIcons.Send /></RailIcon>
          <RailIcon $h={41}><RailIcons.Tree /></RailIcon>
          <RailIcon $h={43}><Plus size={18} strokeWidth={1.2} /></RailIcon>
          <RailSpacer />
          <RailIcon $h={44}><RailIcons.Shot /></RailIcon>
          <RailRule />
          <RailIcon $h={44}><PanelRight size={16} strokeWidth={1.3} /></RailIcon>
          <RailIcon $h={50}><Settings size={18} strokeWidth={1.2} /></RailIcon>
        </Rail>
      </Below>

      <Dialog>
        <DialogTitle>
          <DialogTitleText>SSL VPN配置</DialogTitleText>
          <CloseDot><X size={14} strokeWidth={3.5} /></CloseDot>
        </DialogTitle>
        <TitleGap />
        <Wizard>
          <WizardNav>
            <WizardItem>欢迎页</WizardItem>
            <WizardItem>接入用户</WizardItem>
            <WizardItem>接入接口/隧道接口</WizardItem>
            <WizardItem $active>隧道路由配置</WizardItem>
          </WizardNav>
          <WizardMain>
            <Panel>
              <PanelTitle>隧道路由</PanelTitle>
              <FormArea>
                <Form>
                  <FormRow><FormLabel>IP:</FormLabel><Input /></FormRow>
                  <FormRow><FormLabel>网络掩码:</FormLabel><Input /></FormRow>
                  <FormRow><FormLabel>度量值:</FormLabel><Input>35</Input><Hint>(1~9999)</Hint></FormRow>
                </Form>
                <AddWrap><SmallButton>添加</SmallButton></AddWrap>
              </FormArea>
              <TableArea>
                <RouteTable>
                  <RouteHead>
                    <HeadCell $center><Check /></HeadCell>
                    <HeadCell>IP</HeadCell>
                    <HeadCell>网络掩码</HeadCell>
                    <HeadCell>度量值</HeadCell>
                    <div />
                  </RouteHead>
                  <RouteBody>
                    <RouteRows>
                      <RouteRow>
                        <RouteCell $center><Check /></RouteCell>
                        <RouteCell>0.0.0.0</RouteCell>
                        <RouteCell>0.0.0.0</RouteCell>
                        <RouteCell>1</RouteCell>
                      </RouteRow>
                    </RouteRows>
                    <RouteScroll><Tri $dir="up" $c="#888" /></RouteScroll>
                  </RouteBody>
                </RouteTable>
                <SideActions><SmallButton $off>删除</SmallButton></SideActions>
              </TableArea>
            </Panel>
          </WizardMain>
        </Wizard>
        <DialogFootGap />
        <DialogFoot>
          <FootButton>高级配置</FootButton>
          <FootButton>上一步</FootButton>
          <FootButton>完成</FootButton>
          <FootButton>取消</FootButton>
        </DialogFoot>
      </Dialog>

      <RailThumb />
      <Badge><BadgeInner><BadgeLogo /></BadgeInner></Badge>
      <Watermark>CSDN @白帽子讲Web安全</Watermark>
    </Root>
  );
}
